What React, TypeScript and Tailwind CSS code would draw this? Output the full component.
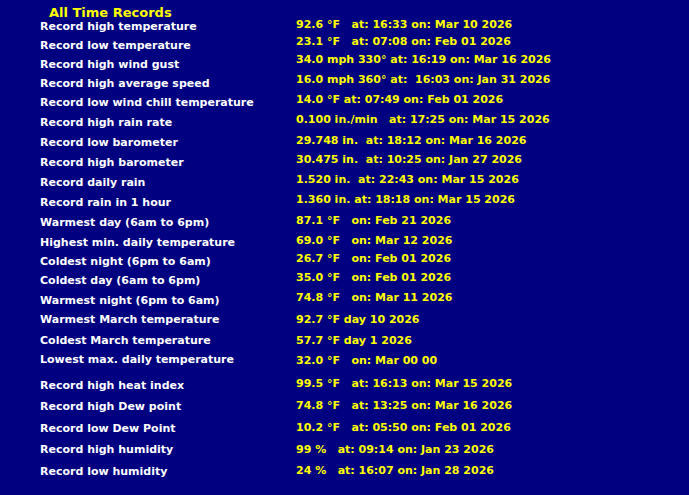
import React from 'react';

type Rec = { label: string; value: string; h: string; shift: string };

const RECORDS: Rec[] = [
  { label: 'Record high temperature', value: '92.6 °F   at: 16:33 on: Mar 10 2026', h: 'h-[19px]', shift: 'mt-[-2px]' },
  { label: 'Record low temperature', value: '23.1 °F   at: 07:08 on: Feb 01 2026', h: 'h-[19px]', shift: 'mt-[-4px]' },
  { label: 'Record high wind gust', value: '34.0 mph 330° at: 16:19 on: Mar 16 2026', h: 'h-[19px]', shift: 'mt-[-5px]' },
  { label: 'Record high average speed', value: '16.0 mph 360° at:  16:03 on: Jan 31 2026', h: 'h-[19px]', shift: 'mt-[-4px]' },
  { label: 'Record low wind chill temperature', value: '14.0 °F at: 07:49 on: Feb 01 2026', h: 'h-[20px]', shift: 'mt-[-3px]' },
  { label: 'Record high rain rate', value: '0.100 in./min   at: 17:25 on: Mar 15 2026', h: 'h-[20px]', shift: 'mt-[-3px]' },
  { label: 'Record low barometer', value: '29.748 in.  at: 18:12 on: Mar 16 2026', h: 'h-[20px]', shift: 'mt-[-2px]' },
  { label: 'Record high barometer', value: '30.475 in.  at: 10:25 on: Jan 27 2026', h: 'h-[20px]', shift: 'mt-[-3px]' },
  { label: 'Record daily rain', value: '1.520 in.  at: 22:43 on: Mar 15 2026', h: 'h-[20px]', shift: 'mt-[-3px]' },
  { label: 'Record rain in 1 hour', value: '1.360 in. at: 18:18 on: Mar 15 2026', h: 'h-[20px]', shift: 'mt-[-3px]' },
  { label: 'Warmest day (6am to 6pm)', value: '87.1 °F   on: Feb 21 2026', h: 'h-[20px]', shift: 'mt-[-2px]' },
  { label: 'Highest min. daily temperature', value: '69.0 °F   on: Mar 12 2026', h: 'h-[19px]', shift: 'mt-[-2px]' },
  { label: 'Coldest night (6pm to 6am)', value: '26.7 °F   on: Feb 01 2026', h: 'h-[19px]', shift: 'mt-[-3px]' },
  { label: 'Coldest day (6am to 6pm)', value: '35.0 °F   on: Feb 01 2026', h: 'h-[20px]', shift: 'mt-[-3px]' },
  { label: 'Warmest night (6pm to 6am)', value: '74.8 °F   on: Mar 11 2026', h: 'h-[19px]', shift: 'mt-[-3px]' },
  { label: 'Warmest March temperature', value: '92.7 °F day 10 2026', h: 'h-[21px]', shift: 'mt-0' },
  { label: 'Coldest March temperature', value: '57.7 °F day 1 2026', h: 'h-[19px]', shift: 'mt-0' },
  { label: 'Lowest max. daily temperature', value: '32.0 °F   on: Mar 00 00', h: 'h-[26px]', shift: 'mt-[1px]' },
  { label: 'Record high heat index', value: '99.5 °F   at: 16:13 on: Mar 15 2026', h: 'h-[21px]', shift: 'mt-[-2px]' },
  { label: 'Record high Dew point', value: '74.8 °F   at: 13:25 on: Mar 16 2026', h: 'h-[22px]', shift: 'mt-[-1px]' },
  { label: 'Record low Dew Point', value: '10.2 °F   at: 05:50 on: Feb 01 2026', h: 'h-[21px]', shift: 'mt-[-1px]' },
  { label: 'Record high humidity', value: '99 %   at: 09:14 on: Jan 23 2026', h: 'h-[22px]', shift: 'mt-0' },
  { label: 'Record low humidity', value: '24 %   at: 16:07 on: Jan 28 2026', h: 'h-[16px]', shift: 'mt-[-1px]' },
];

export default function App() {
  return (
    <div className="w-[689px] h-[495px] bg-[#000080] pl-[40px] font-['DejaVu_Sans',sans-serif] font-bold overflow-hidden">
      <div className="pt-[6px] pl-[9px] h-[20px] leading-[14px] text-[13px] text-[#ffff00]">All Time Records</div>
      <div className="flex flex-col">
        {RECORDS.map((r) => (
          <div key={r.label} className={`grid grid-cols-[256px_auto] items-start ${r.h}`}>
            <span className="text-white text-[11px] leading-[14px] whitespace-nowrap">{r.label}</span>
            <span className={`text-[#ffff00] text-[11px] leading-[14px] whitespace-pre ${r.shift}`}>{r.value}</span>
          </div>
        ))}
      </div>
    </div>
  );
}
